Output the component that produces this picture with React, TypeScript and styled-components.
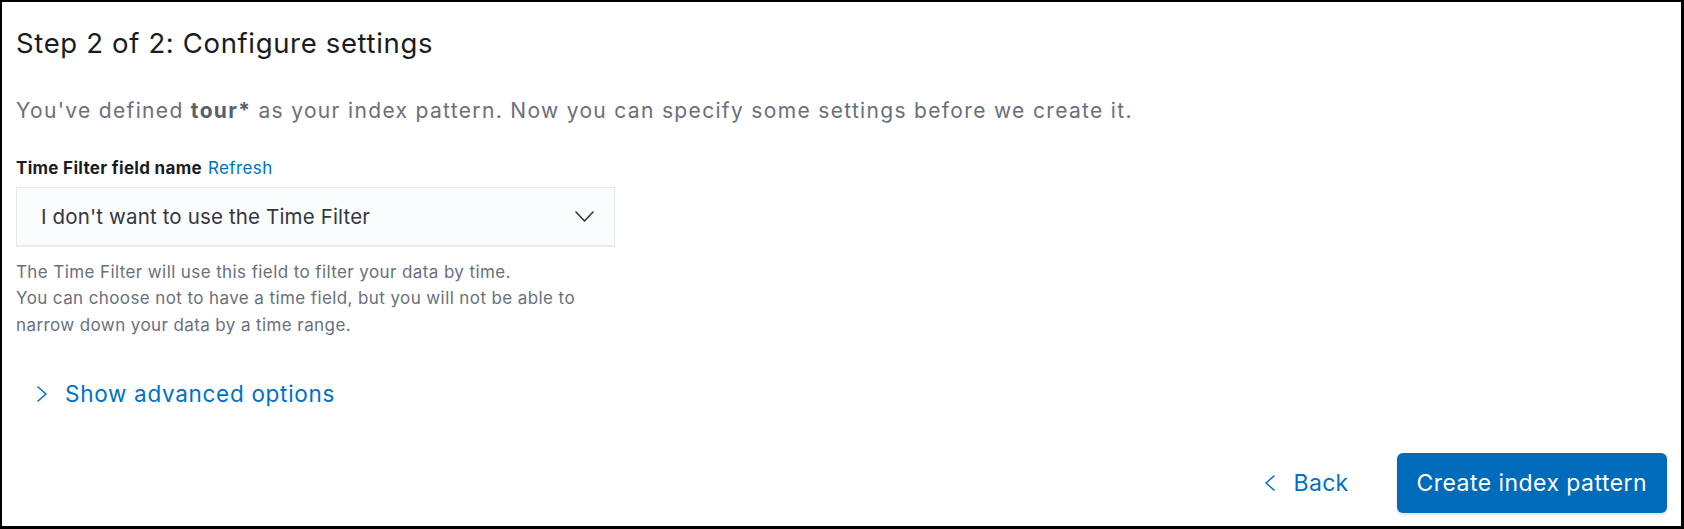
import React from 'react';
import styled, { createGlobalStyle } from 'styled-components';

const GlobalStyle = createGlobalStyle`
  html, body {
    margin: 0;
    padding: 0;
    background: #fff;
  }
  body {
    font-family: Inter, "Noto Sans", "Liberation Sans", sans-serif;
    -webkit-font-smoothing: antialiased;
  }
`;

const Chevron = ({ dir, color, w, h }: { dir: 'down' | 'left' | 'right'; color: string; w: number; h: number }) => {
    const points =
        dir === 'down' ? `1,1 ${w / 2},${h - 1} ${w - 1},1`
            : dir === 'right' ? `1,1 ${w - 1},${h / 2} 1,${h - 1}`
                : `${w - 1},1 1,${h / 2} ${w - 1},${h - 1}`;
    return (
        <svg width={w} height={h} viewBox={`0 0 ${w} ${h}`} fill="none">
            <polyline points={points} stroke={color} strokeWidth={1.6} strokeLinecap="round" strokeLinejoin="round" />
        </svg>
    );
};

export default function App() {
    return (
        <>
            <GlobalStyle />
            <Panel>
                <Title>Step 2 of 2: Configure settings</Title>
                <Description>
                    You've defined <strong>tour*</strong> as your index pattern. Now you can specify some settings before we create it.
                </Description>

                <FormRow>
                    <LabelRow>
                        <Label>Time Filter field name</Label>
                        <LinkText>Refresh</LinkText>
                    </LabelRow>
                    <Select>
                        <SelectValue>I don't want to use the Time Filter</SelectValue>
                        <Chevron dir="down" color="#343741" w={19} h={11} />
                    </Select>
                    <HelpText>
                        The Time Filter will use this field to filter your data by time.<br />
                        You can choose not to have a time field, but you will not be able to<br />
                        narrow down your data by a time range.
                    </HelpText>
                </FormRow>

                <AdvancedToggle>
                    <IconSlot>
                        <Chevron dir="right" color="#0071c2" w={10} h={16} />
                    </IconSlot>
                    Show advanced options
                </AdvancedToggle>

                <Footer>
                    <BackButton>
                        <Chevron dir="left" color="#0071c2" w={10} h={16} />
                        Back
                    </BackButton>
                    <PrimaryButton>Create index pattern</PrimaryButton>
                </Footer>
            </Panel>
        </>
    );
}

const Panel = styled.div`
    box-sizing: border-box;
    width: 1684px;
    height: 529px;
    border: 2px solid #000;
    border-right-width: 3px;
    border-bottom-width: 3px;
    padding: 25px 14px 13px 14px;
    display: flex;
    flex-direction: column;
    background: #fff;
`;

const Title = styled.h2`
    margin: 0;
    font-size: 27.5px;
    line-height: 33px;
    font-weight: 400;
    color: #1a1c21;
    letter-spacing: 0.65px;
`;

const Description = styled.p`
    margin: 35px 0 0;
    font-size: 21px;
    line-height: 31.5px;
    color: #69707d;
    letter-spacing: 1.33px;

    strong {
        font-weight: 700;
        color: #5a606b;
    }
`;

const FormRow = styled.div`
    margin-top: 29px;
    width: 599px;
    display: flex;
    flex-direction: column;
`;

const LabelRow = styled.div`
    display: flex;
    align-items: baseline;
    gap: 6px;
    line-height: 24px;
`;

const Label = styled.span`
    font-size: 17px;
    font-weight: 700;
    color: #1a1c21;
    letter-spacing: 0.3px;
`;

const LinkText = styled.span`
    font-size: 17px;
    color: #0071c2;
    letter-spacing: 0.4px;
`;

const Select = styled.div`
    box-sizing: border-box;
    margin-top: 7px;
    height: 59px;
    display: flex;
    align-items: center;
    justify-content: space-between;
    padding: 0 20px 0 24px;
    background: #fbfcfd;
    border: 1px solid #e4e7ec;
    box-shadow: 0 1px 1px rgba(0, 0, 0, 0.06);
`;

const SelectValue = styled.span`
    font-size: 20.5px;
    color: #343741;
    letter-spacing: 0.15px;
`;

const HelpText = styled.div`
    margin-top: 13px;
    font-size: 17px;
    line-height: 26.8px;
    color: #69707d;
    letter-spacing: 0.4px;
`;

const AdvancedToggle = styled.div`
    margin-top: 38px;
    display: flex;
    align-items: center;
    font-size: 22.5px;
    line-height: 34px;
    color: #0071c2;
    padding-left: 21px;
    letter-spacing: 0.7px;
`;

const IconSlot = styled.span`
    display: inline-flex;
    width: 28px;
    padding-top: 1px;
`;

const Footer = styled.div`
    margin-top: auto;
    display: flex;
    justify-content: flex-end;
    align-items: center;
    gap: 48px;
`;

const BackButton = styled.div`
    display: flex;
    align-items: center;
    gap: 19px;
    font-size: 23px;
    color: #0071c2;
    letter-spacing: 0.3px;
`;

const PrimaryButton = styled.button`
    box-sizing: border-box;
    height: 60px;
    padding: 0 20px;
    border: none;
    border-radius: 6px;
    background: #006bb8;
    color: #fff;
    font-family: inherit;
    font-size: 23px;
    font-weight: 400;
    letter-spacing: 0.45px;
    box-shadow: 0 2px 3px rgba(0, 60, 120, 0.15);
`;
